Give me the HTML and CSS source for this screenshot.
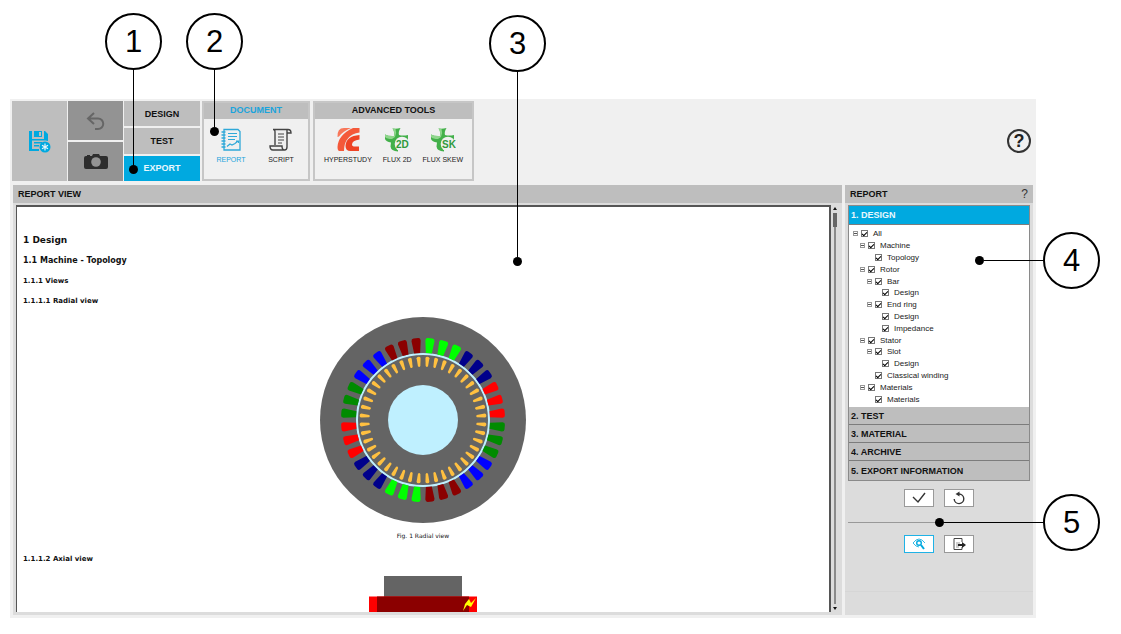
FILE: index.html
```
<!DOCTYPE html>
<html lang="en">
<head>
  <meta charset="utf-8">
  <title>Export - Report</title>
  <link rel="stylesheet" href="styles.css">
</head>
<body>
  <div class="app">
    <!-- Toolbar -->
    <header class="toolbar">
      <button class="save" aria-label="Save">
        <svg width="22" height="23" viewBox="0 0 22 23">
          <path fill="#00a9e0" d="M0 1h3v8h12V1h1l3 3v7a6 6 0 0 0-3-.5H3V21H0z"/>
          <path fill="#00a9e0" d="M5 1h8v6H5zM5 12h8v1.500H5zM5 15h5v1.500H5zM3 19h7v2H3z"/>
          <path fill="#bebebe" d="M10 2h2v4h-2z"/>
          <circle cx="16" cy="17" r="5.500" fill="#00a9e0"/>
          <path stroke="#e8f5fa" stroke-width="1.200" d="M16 13.500v7M13 15.200l6 3.600M19 15.200l-6 3.600"/>
        </svg>
      </button>
      <div class="tools">
        <button aria-label="Undo">
          <svg width="20" height="20" viewBox="0 0 20 20" fill="none" stroke="#666" stroke-width="2">
            <path d="M8 2L2 7.500l6 5.500M2.500 7.500H12a5 5 0 0 1 0 10.500H9"/>
          </svg>
        </button>
        <button aria-label="Camera">
          <svg width="24" height="17" viewBox="0 0 24 17">
            <path fill="#2d2d2d" d="M2 3h1V2h3v1h2l1-2h6l1 2h6q2 0 2 2v9q0 2-2 2H2q-2 0-2-2V5q0-2 2-2z"/>
            <circle cx="12" cy="9" r="4.800" fill="#939393"/>
          </svg>
        </button>
      </div>
      <nav class="tabs">
        <button>DESIGN</button>
        <button>TEST</button>
        <button class="active">EXPORT</button>
      </nav>
      <section class="group document">
        <h2>DOCUMENT</h2>
        <div class="items">
          <button class="active">
            <svg width="26" height="26" viewBox="0 0 26 26" fill="none" stroke="#2fa8d8" stroke-width="1.300">
              <path d="M6 2.500h14l2 2V23H6z"/>
              <path d="M3.500 5h4M3.500 8h4M3.500 11h4M3.500 14h4M3.500 17h4M3.500 20h4" stroke-width="1.700"/>
              <path d="M10 6.500h9M10 9.500h9M10 12.500h7" stroke-width="1"/>
              <path d="M9 19.500l3-2.500 2 1 3-1.500 3-2.500M18 14h2.500v2" stroke-width="1.200"/>
            </svg>
            REPORT
          </button>
          <button>
            <svg width="26" height="26" viewBox="0 0 26 26" fill="none" stroke="#444" stroke-width="1.400">
              <path d="M7 18V5q0-2.500-2-2.500M5 2.500h15q3 0 3 3.500h-4M19 6V3M19 6v14q0 3-2.500 3T14 19H2q0 4 3 4h12"/>
              <path d="M10 7h6M10 10h6M10 13h6M10 16h4" stroke-width="1"/>
            </svg>
            SCRIPT
          </button>
        </div>
      </section>
      <section class="group advanced">
        <h2>ADVANCED TOOLS</h2>
        <div class="items">
          <button>
            <svg width="26" height="26" viewBox="0 0 26 26" fill="#f4593a">
              <path fill="#f8775a" d="M9 1h7Q8 4 4 9.500L2.500 10Q2 1 9 1z"/>
              <path d="M2.500 20Q3 8 18 1h6.500v4.500Q9 8 9 24H4.500q-2 0-2-4z"/>
              <path fill="#ee4426" d="M24.500 8v4.500Q17 13.500 17 17.500q0 2 3 2h4V24h-8.500q-5 0-5-5Q11 9 24.500 8z"/>
            </svg>
            HYPERSTUDY
          </button>
          <button>
            <svg class="flux" width="26" height="26" viewBox="0 0 26 26">
              <path fill="#43b04a" d="M8.500 1.500q4 .5 8-.5-2.500 4-1.500 7 4 1 9 0v6l-10 8v2.500q-7-.5-7.500-5l.5-4Q2 14.500 1 12V7.500q4 2 9 1.500 1-4-1.500-7.500z"/>
              <path fill="#8fd68c" d="M8.500 1.500l3 .3Q13 6 11 10L8 12Q3 12 1 10V7.500q4 2 9 1.500 1-4-1.500-7.500z"/>
              <circle cx="18" cy="17" r="7.300" fill="#f0f0f0"/>
              <text x="12" y="21">2D</text>
            </svg>
            FLUX 2D
          </button>
          <button>
            <svg class="flux" width="26" height="26" viewBox="0 0 26 26">
              <path fill="#43b04a" d="M8.500 1.500q4 .5 8-.5-2.500 4-1.500 7 4 1 9 0v6l-10 8v2.500q-7-.5-7.500-5l.5-4Q2 14.500 1 12V7.500q4 2 9 1.500 1-4-1.500-7.500z"/>
              <path fill="#8fd68c" d="M8.500 1.500l3 .3Q13 6 11 10L8 12Q3 12 1 10V7.500q4 2 9 1.500 1-4-1.500-7.500z"/>
              <circle cx="18" cy="17" r="7.300" fill="#f0f0f0"/>
              <text x="12" y="21">SK</text>
            </svg>
            FLUX SKEW
          </button>
        </div>
      </section>
      <button class="help" aria-label="Help">?</button>
    </header>

    <main class="content">
      <!-- Report document -->
      <section class="panel view">
        <h2>REPORT VIEW</h2>
        <div class="viewer">
          <article class="page">
            <h3 class="title">1 Design</h3>
            <h4 class="chapter">1.1 Machine - Topology</h4>
            <h5>1.1.1 Views</h5>
            <h6>1.1.1.1 Radial view</h6>
            <figure>
              <svg width="206" height="206" viewBox="-103 -103 206 206">
                <circle r="103" fill="#646464"/>
                <circle r="66" fill="none" stroke="#bff0ff" stroke-width="2"/>
                <g id="slots"></g>
                <g id="bars" fill="#ffc040"></g>
                <circle r="35" fill="#bff0ff"/>
              </svg>
              <figcaption>Fig. 1 Radial view</figcaption>
            </figure>
            <h6 class="second">1.1.1.2 Axial view</h6>
            <figure>
              <svg width="108" height="70" viewBox="0 0 108 70">
                <path fill="#646464" d="M15 1h78v69H15z"/>
                <path fill="#f00" d="M0 21.500h108V50H0z"/>
                <path fill="#8b0000" d="M8 21.500h92V50H8z"/>
                <path fill="#ff0" d="M107 23l-5 9-4-2-4 6 2-7 4-5 2 4z"/>
              </svg>
            </figure>
          </article>
          <div class="scrollbar">
            <i class="arrow-up"></i>
            <div class="track"><div class="thumb"></div></div>
            <i class="arrow-down"></i>
          </div>
        </div>
      </section>

      <!-- Report options -->
      <aside class="panel options">
        <h2>REPORT <button class="hint" aria-label="Report help">?</button></h2>
        <div class="accordion">
          <button class="section active">1. DESIGN</button>
          <ul class="tree">
            <li class="l0"><button aria-label="Collapse"></button><label><input type="checkbox" checked>All</label></li>
            <li class="l1"><button aria-label="Collapse"></button><label><input type="checkbox" checked>Machine</label></li>
            <li class="l2 leaf"><label><input type="checkbox" checked>Topology</label></li>
            <li class="l1"><button aria-label="Collapse"></button><label><input type="checkbox" checked>Rotor</label></li>
            <li class="l2"><button aria-label="Collapse"></button><label><input type="checkbox" checked>Bar</label></li>
            <li class="l3 leaf"><label><input type="checkbox" checked>Design</label></li>
            <li class="l2"><button aria-label="Collapse"></button><label><input type="checkbox" checked>End ring</label></li>
            <li class="l3 leaf"><label><input type="checkbox" checked>Design</label></li>
            <li class="l3 leaf"><label><input type="checkbox" checked>Impedance</label></li>
            <li class="l1"><button aria-label="Collapse"></button><label><input type="checkbox" checked>Stator</label></li>
            <li class="l2"><button aria-label="Collapse"></button><label><input type="checkbox" checked>Slot</label></li>
            <li class="l3 leaf"><label><input type="checkbox" checked>Design</label></li>
            <li class="l2 leaf"><label><input type="checkbox" checked>Classical winding</label></li>
            <li class="l1"><button aria-label="Collapse"></button><label><input type="checkbox" checked>Materials</label></li>
            <li class="l2 leaf"><label><input type="checkbox" checked>Materials</label></li>
          </ul>
          <button class="section">2. TEST</button>
          <button class="section">3. MATERIAL</button>
          <button class="section">4. ARCHIVE</button>
          <button class="section">5. EXPORT INFORMATION</button>
        </div>
        <div class="actions">
          <button aria-label="Apply">
            <svg width="16" height="14" viewBox="0 0 16 14" fill="none" stroke="#333" stroke-width="1.400"><path d="M2 6l5 5 7-9"/></svg>
          </button>
          <button aria-label="Reset">
            <svg width="14" height="14" viewBox="0 0 14 14" fill="none" stroke="#333" stroke-width="1.400">
              <path d="M7 3a4.800 4.800 0 1 1-4.800 5"/><path fill="#333" stroke="none" d="M3.500 3l4-2.500v5z"/>
            </svg>
          </button>
        </div>
        <hr>
        <div class="actions">
          <button class="active" aria-label="Preview">
            <svg width="14" height="12" viewBox="0 0 14 12" fill="none" stroke="#00a9e0">
              <path d="M1 5q6-8 12 0M1 5q3 4 6 4" stroke-width=".8"/>
              <circle cx="7" cy="5" r="2.300" stroke-width="1.400"/>
              <path d="M9 7l3 4" stroke-width="2"/>
            </svg>
          </button>
          <button aria-label="Export">
            <svg width="14" height="14" viewBox="0 0 14 14" fill="none" stroke="#444">
              <path d="M10 5V1.500H2v11h8V10"/><path d="M4 6h4M4 8h3M4 10h3" stroke="#999"/>
              <path d="M6 8h5" stroke="#222" stroke-width="2"/><path fill="#222" stroke="none" d="M10 5l4 3-4 3z"/>
            </svg>
          </button>
        </div>
        <footer></footer>
      </aside>
    </main>
  </div>

  <!-- Numbered callouts -->
  <div class="callout down c1"><b>1</b></div>
  <div class="callout down c2"><b>2</b></div>
  <div class="callout down c3"><b>3</b></div>
  <div class="callout left c4"><b>4</b></div>
  <div class="callout left c5"><b>5</b></div>

<script>
var NS = "http://www.w3.org/2000/svg";
// one colour for every three slots, clockwise from the top
var phases = ["#00ff00", "#00008b", "#ff0000", "#008b00", "#0000ff", "#8b0000"];

function ring(id, count, shape, colour) {
  var group = document.getElementById(id);
  for (var i = 0; i < count; i++) {
    var path = document.createElementNS(NS, "path");
    path.setAttribute("d", shape);
    path.setAttribute("transform", "rotate(" + (i + 0.5) * 360 / count + ")");
    if (colour) { path.setAttribute("fill", colour(i)); }
    group.appendChild(path);
  }
}
ring("slots", 36, "M-3-67L-4.600-79.500Q-4.500-82-2.300-82H2.300Q4.500-82 4.600-79.500L3-67z", function (i) {
  return phases[Math.floor(i / 3) % 6];
});
ring("bars", 44, "M-1.200-54L-2-62Q-1.800-63.500 0-63.500T2-62L1.200-54Q0-52.500-1.200-54z");
</script>
</body>
</html>
```
FILE: styles.css
```
* {
  box-sizing: border-box;
}
body {
  display: flex;
  height: 100vh;
  margin: 0;
  padding: 99px 85px 16px 10px;
  background: #fff;
  color: #111;
  font-family: "Liberation Sans", Arial, sans-serif;
  font-size: 9px;
  position: relative;
}
button {
  margin: 0;
  padding: 0;
  border: 0;
  background: none;
  color: inherit;
  font: inherit;
}
svg {
  display: block;
}
h2, h3, h4, h5, h6, ul, figure {
  margin: 0;
  padding: 0;
}
.app {
  flex: 1;
  min-width: 0;
  display: flex;
  flex-direction: column;
  gap: 4px;
  padding: 2px 3px 3px 2px;
  background: #f0f0f0;
}

/* Toolbar */
.toolbar {
  display: flex;
  height: 80px;
  gap: 1px;
}
.save {
  width: 55px;
  background: #bebebe;
  display: flex;
  align-items: center;
  justify-content: center;
}
.tools, .tabs {
  display: flex;
  flex-direction: column;
  width: 55px;
  gap: 2px;
}
.tools button {
  flex: 1;
  display: flex;
  align-items: center;
  justify-content: center;
  background: #939393;
}
.tabs {
  width: 76px;
}
.tabs button {
  flex: 1;
  background: #bebebe;
  font-weight: bold;
}
.tabs .active {
  background: #00a9e0;
  color: #e8f7fd;
}
.group {
  border: 2px solid #c6c6c6;
}
.document {
  width: 108px;
  margin-left: 1px;
}
.advanced {
  width: 161px;
  margin-left: 2px;
}
.group h2 {
  height: 16px;
  line-height: 14px;
  background: #bebebe;
  font-size: 9px;
  text-align: center;
}
.document h2, .items .active {
  color: #1ba4dc;
}
.items {
  display: flex;
  justify-content: center;
  padding-top: 8px;
  color: #222;
}
.items button {
  display: flex;
  flex-direction: column;
  align-items: center;
  gap: 2px;
  font-size: 7px;
  line-height: 10px;
  white-space: nowrap;
}
.document .items button {
  width: 50px;
}
.advanced .items {
  gap: 11px;
}
.flux text {
  font-size: 10px;
  font-weight: bold;
  fill: #2f9a3c;
}
.help {
  width: 24px;
  height: 24px;
  margin: auto 2px auto auto;
  border: 2px solid #333;
  border-radius: 50%;
  color: #222;
  font-size: 18px;
  font-weight: bold;
  line-height: 20px;
}

/* Panels */
.content {
  flex: 1;
  min-height: 0;
  display: flex;
  gap: 3px;
  padding-left: 1px;
}
.panel {
  display: flex;
  flex-direction: column;
  background: #dcdcdc;
}
.panel > h2 {
  height: 18px;
  padding: 0 5px;
  line-height: 18px;
  background: #bebebe;
  font-size: 9px;
}
.view {
  flex: 1;
  min-width: 0;
}
.viewer {
  flex: 1;
  min-height: 0;
  display: flex;
  padding: 2px 3px 3px;
}
.page {
  flex: 1;
  overflow: hidden;
  padding: 27px 6px 0;
  border: solid #555;
  border-width: 2px 2px 0 1px;
  background: #fff;
  font-family: "DejaVu Sans", Verdana, sans-serif;
  line-height: 12px;
}
.title {
  font-size: 9px;
}
.chapter {
  margin-top: 9px;
  font-size: 8px;
}
h5, h6 {
  margin-top: 8px;
  font-size: 7px;
}
figure {
  display: flex;
  flex-direction: column;
  align-items: center;
  gap: 7px;
  margin-top: 10px;
}
figcaption {
  font-size: 6px;
}
.second {
  margin-top: 11px;
}
.scrollbar {
  display: flex;
  flex-direction: column;
  align-items: center;
  width: 8px;
  padding: 2px 0;
}
.arrow-up, .arrow-down {
  border: 2px solid transparent;
}
.arrow-up {
  border-top: 0;
  border-bottom: 3px solid #111;
}
.arrow-down {
  border-bottom: 0;
  border-top: 3px solid #111;
}
.track {
  flex: 1;
  width: 2px;
  margin: 3px 0;
  background: #8a8a8a;
  display: flex;
  justify-content: center;
}
.thumb {
  flex: none;
  width: 4px;
  height: 14px;
  background: #666;
}

/* Options */
.options {
  width: 188px;
}
.options > h2 {
  display: flex;
  justify-content: space-between;
}
.hint {
  font-size: 12px;
  font-weight: normal;
  color: #333;
}
.accordion {
  display: flex;
  flex-direction: column;
  margin: 2px 3px 0;
  border: 1px solid #8a8a8a;
  background: #fff;
}
.section {
  height: 18px;
  padding: 0 2px;
  border-bottom: 1px solid #7c7c7c;
  background: #bebebe;
  font-weight: bold;
  text-align: left;
}
.section:last-child {
  height: 19px;
  border-bottom: 0;
}
.section.active {
  height: 19px;
  background: #00a9e0;
  color: #e8f7fd;
}
.tree {
  display: grid;
  height: 182px;
  padding: 3px 0 2px 4px;
  list-style: none;
  color: #222;
  font-size: 8px;
}
.tree li, .tree label {
  display: flex;
  align-items: center;
}
.tree li button {
  width: 5px;
  height: 5px;
  margin-right: 3px;
  border: 1px solid #999;
  background: linear-gradient(#555, #555) center / 3px 1px no-repeat;
}
.leaf label {
  margin-left: 8px;
}
.l1 { padding-left: 7px; }
.l2 { padding-left: 14px; }
.l3 { padding-left: 21px; }
.tree input {
  appearance: none;
  width: 7px;
  height: 7px;
  margin: 0 5px 0 0;
  border: 1px solid #777;
  display: flex;
  align-items: center;
  justify-content: center;
}
.tree input:checked::before {
  content: "";
  width: 4px;
  height: 2px;
  border: solid #000;
  border-width: 0 0 1px 1px;
  transform: rotate(-45deg);
}
.actions {
  display: flex;
  justify-content: center;
  gap: 10px;
  margin-top: 8px;
}
.actions button {
  display: flex;
  align-items: center;
  justify-content: center;
  width: 30px;
  height: 18px;
  border: 1px solid #999;
  background: #fff;
}
.actions .active {
  border-color: #1fb2e6;
}
hr {
  width: calc(100% - 6px);
  margin: 15px 3px 4px;
  border: 0;
  border-top: 1px solid #999;
}
footer {
  height: 24px;
  margin-top: auto;
  border-top: 1px solid #d6d6d6;
}

/* Callouts */
.callout {
  position: absolute;
  display: flex;
  align-items: center;
}
.callout b {
  flex: none;
  width: 57px;
  height: 57px;
  order: -1;
  border: 2px solid #000;
  border-radius: 50%;
  background: #fff;
  color: #000;
  font-size: 31px;
  font-weight: normal;
  line-height: 53px;
  text-align: center;
}
.callout::before {
  content: "";
  flex: 1;
  background: #000;
}
.callout::after {
  content: "";
  width: 9px;
  height: 9px;
  border-radius: 50%;
  background: #000;
}
.down {
  flex-direction: column;
}
.down::before {
  width: 1px;
}
.left {
  flex-direction: row-reverse;
}
.left::before {
  height: 1px;
}
.c1 { left: 105px; top: 13px; height: 161px; }
.c2 { left: 186px; top: 13px; height: 123px; }
.c3 { left: 489px; top: 15px; height: 251px; }
.c4 { right: 21px; top: 232px; width: 125px; }
.c5 { right: 21px; top: 494px; width: 165px; }
```
